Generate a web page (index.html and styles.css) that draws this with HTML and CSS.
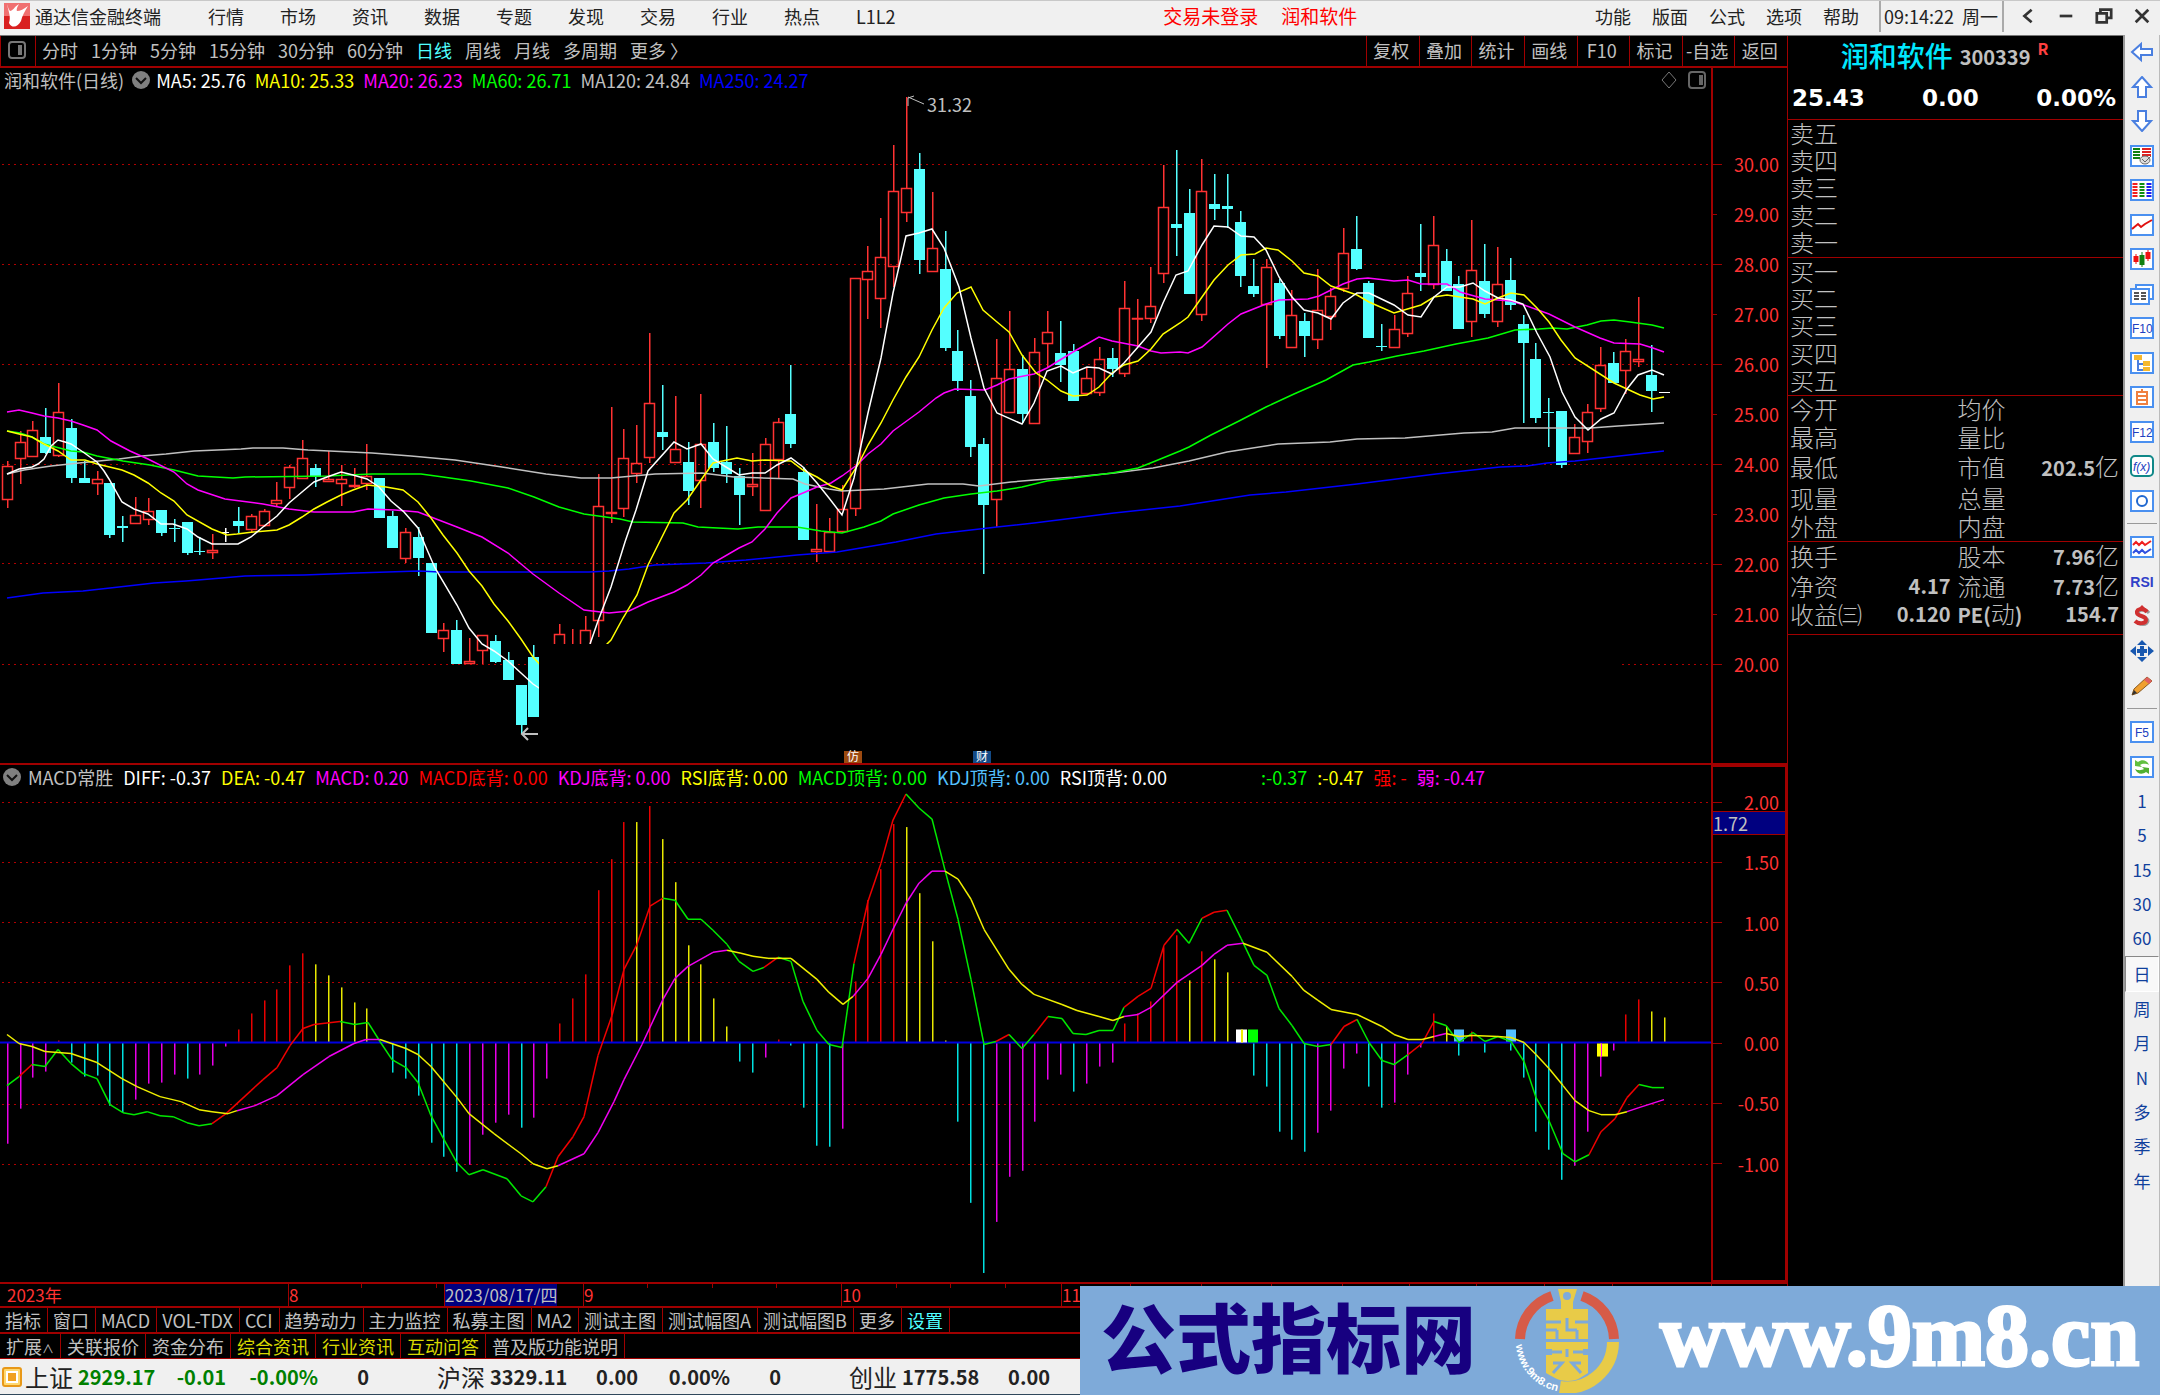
FILE: index.html
```html
<!DOCTYPE html>
<html lang="zh-CN">
<head>
  <meta charset="UTF-8">
  <meta name="viewport" content="width=device-width, initial-scale=1.0">
  <title>通达信金融终端</title>
  <link rel="stylesheet" href="styles.css">
</head>
<body>

<header class="topbar">
  <svg class="logo" viewBox="0 0 26 26" aria-hidden="true">
    <rect width="26" height="26" fill="#d92020"/>
    <path d="M0 0H26V13H0Z" fill="#f07070"/>
    <path d="M3 1C5 10 7 14 5 20C8 26 14 24 17 18C18 13 21 8 24 3C20 6 16 8 13 8C12 6 14 3 15 1C10 4 9 8 6 8C4 6 4 3 3 1Z" fill="#fff"/>
  </svg>
  <span class="app-name">通达信金融终端</span>
  <nav class="menu">
    <a href="#">行情</a><a href="#">市场</a><a href="#">资讯</a><a href="#">数据</a><a href="#">专题</a><a href="#">发现</a><a href="#">交易</a><a href="#">行业</a><a href="#">热点</a><a href="#">L1L2</a>
  </nav>
  <div class="login"><a href="#">交易未登录</a><a href="#">润和软件</a></div>
  <nav class="menu-right">
    <a href="#">功能</a><a href="#">版面</a><a href="#">公式</a><a href="#">选项</a><a href="#">帮助</a>
  </nav>
  <div class="clock"><span>09:14:22</span><span>周一</span></div>
  <div class="win-buttons">
    <button aria-label="返回"><svg viewBox="0 0 20 20"><path d="M14 3L6 10L14 17" fill="none" stroke="#333" stroke-width="3"/></svg></button>
    <button aria-label="最小化"><svg viewBox="0 0 20 20"><path d="M3 10H17" stroke="#333" stroke-width="3"/></svg></button>
    <button aria-label="还原"><svg viewBox="0 0 20 20"><path d="M6 6V3H18V12H14M2 7H13V17H2Z" fill="none" stroke="#333" stroke-width="3"/></svg></button>
    <button aria-label="关闭"><svg viewBox="0 0 20 20"><path d="M3 3L17 17M17 3L3 17" stroke="#333" stroke-width="3"/></svg></button>
  </div>
</header>

<div class="workspace">
  <main class="charts">
    <div class="toolbar">
      <button class="panel-toggle" aria-label="侧栏"><svg viewBox="0 0 18 18"><rect x="1" y="1" width="16" height="16" rx="3" fill="none" stroke="#777" stroke-width="2"/><rect x="10" y="4" width="4" height="10" fill="#777"/></svg></button>
      <div class="periods">
        <button>分时</button><button>1分钟</button><button>5分钟</button><button>15分钟</button><button>30分钟</button><button>60分钟</button><button class="active">日线</button><button>周线</button><button>月线</button><button>多周期</button><button>更多 &#x232A;</button>
      </div>
      <div class="tools">
        <button>复权</button><button>叠加</button><button>统计</button><button>画线</button><button>F10</button><button>标记</button><button>-自选</button><button>返回</button>
      </div>
    </div>

    <section class="pane kline">
      <div class="plot">
        <div class="legend">
          <span class="c-gray">润和软件(日线)</span>
          <svg class="drop" viewBox="0 0 18 18"><circle cx="9" cy="9" r="9" fill="#808080"/><path d="M4 7L9 12L14 7" fill="none" stroke="#111" stroke-width="2"/></svg>
          <span class="c-white">MA5: 25.76</span><span class="c-yellow">MA10: 25.33</span><span class="c-magenta">MA20: 26.23</span><span class="c-green">MA60: 26.71</span><span class="c-gray">MA120: 24.84</span><span class="c-blue">MA250: 24.27</span>
          <svg class="corner" viewBox="0 0 46 18"><path d="M8 1L15 9L8 17L1 9Z" fill="none" stroke="#777"/><rect x="28" y="1" width="16" height="16" rx="3" fill="none" stroke="#666" stroke-width="2"/><rect x="38" y="4" width="4" height="10" fill="#666"/></svg>
        </div>
        <svg id="kline" viewBox="0 94 1711 669" preserveAspectRatio="none"></svg>
      </div>
      <ol class="axis price-axis">
        <li>30.00</li><li>29.00</li><li>28.00</li><li>27.00</li><li>26.00</li><li>25.00</li><li>24.00</li><li>23.00</li><li>22.00</li><li>21.00</li><li>20.00</li>
      </ol>
    </section>

    <section class="pane macd">
      <div class="plot">
        <div class="legend">
          <svg class="drop" viewBox="0 0 18 18"><circle cx="9" cy="9" r="9" fill="#808080"/><path d="M4 7L9 12L14 7" fill="none" stroke="#111" stroke-width="2"/></svg>
          <span class="c-gray">MACD常胜</span><span class="c-white">DIFF: -0.37</span><span class="c-yellow">DEA: -0.47</span><span class="c-magenta">MACD: 0.20</span><span class="c-red">MACD底背: 0.00</span><span class="c-magenta">KDJ底背: 0.00</span><span class="c-yellow">RSI底背: 0.00</span><span class="c-green">MACD顶背: 0.00</span><span class="c-sky">KDJ顶背: 0.00</span><span class="c-white">RSI顶背: 0.00</span>
          <span class="c-green signal">:-0.37</span><span class="c-yellow">:-0.47</span><span class="c-red">强: -</span><span class="c-magenta">弱: -0.47</span>
        </div>
        <svg id="macd" viewBox="0 791 1711 490" preserveAspectRatio="none"></svg>
      </div>
      <ol class="axis macd-axis">
        <li>2.00</li><li>1.50</li><li>1.00</li><li>0.50</li><li>0.00</li><li>-0.50</li><li>-1.00</li>
        <li class="cursor-value">1.72</li>
      </ol>
    </section>

    <div class="dates">
      <span>2023年</span><span>8</span><span><b>2023/08/17/四</b></span><span>9</span><span>10</span><span>11</span><span></span>
      <svg id="ticks" viewBox="0 0 1787 24" preserveAspectRatio="none"></svg>
    </div>
    <div class="tabs">
      <button>指标</button><button>窗口</button><button>MACD</button><button>VOL-TDX</button><button>CCI</button><button>趋势动力</button><button>主力监控</button><button>私募主图</button><button>MA2</button><button>测试主图</button><button>测试幅图A</button><button>测试幅图B</button><button>更多</button><button class="active">设置</button>
    </div>
    <div class="tabs">
      <button>扩展<small>∧</small></button><button>关联报价</button><button>资金分布</button><button class="hot">综合资讯</button><button class="hot">行业资讯</button><button class="hot">互动问答</button><button>普及版功能说明</button>
    </div>
  </main>

  <aside class="quote">
    <div class="quote-head">
      <h1>润和软件 <small>300339</small> <sup>R</sup></h1>
      <p><span>25.43</span><span>0.00</span><span>0.00%</span></p>
    </div>
    <table class="book">
      <tr><th>卖五</th></tr><tr><th>卖四</th></tr><tr><th>卖三</th></tr><tr><th>卖二</th></tr><tr><th>卖一</th></tr>
    </table>
    <table class="book">
      <tr><th>买一</th></tr><tr><th>买二</th></tr><tr><th>买三</th></tr><tr><th>买四</th></tr><tr><th>买五</th></tr>
    </table>
    <table class="stats">
      <tr><th>今开</th><td></td><th>均价</th><td></td></tr>
      <tr><th>最高</th><td></td><th>量比</th><td></td></tr>
      <tr><th>最低</th><td></td><th>市值</th><td>202.5<i>亿</i></td></tr>
      <tr><th>现量</th><td></td><th>总量</th><td></td></tr>
      <tr><th>外盘</th><td></td><th>内盘</th><td></td></tr>
    </table>
    <table class="stats">
      <tr><th>换手</th><td></td><th>股本</th><td>7.96<i>亿</i></td></tr>
      <tr><th>净资</th><td>4.17</td><th>流通</th><td>7.73<i>亿</i></td></tr>
      <tr><th>收益㈢</th><td>0.120</td><th><b>PE(</b>动<b>)</b></th><td>154.7</td></tr>
    </table>
  </aside>

  <div class="sidebar">
    <div class="group">
      <button aria-label="后退"><svg viewBox="0 0 24 22"><path d="M2 11L11 3V8H22V14H11V19Z" fill="#fff" stroke="#4a7fe0" stroke-width="2"/></svg></button>
      <button aria-label="上移"><svg viewBox="0 0 24 22"><path d="M12 1L21 11H16V21H8V11H3Z" fill="#fff" stroke="#4a7fe0" stroke-width="2"/></svg></button>
      <button aria-label="下移"><svg viewBox="0 0 24 22"><path d="M12 21L21 11H16V1H8V11H3Z" fill="#fff" stroke="#4a7fe0" stroke-width="2"/></svg></button>
      <button aria-label="自选报价"><svg viewBox="0 0 24 22"><rect class="frame" x="1" y="1" width="22" height="20"/><path d="M3 4H10M3 7H10M3 10H10M3 13H10" stroke="#108010" stroke-width="2"/><path d="M12 4H21M12 7H21M12 10H21" stroke="#e02020" stroke-width="2"/><ellipse cx="15" cy="15" rx="5" ry="4" fill="#ddd" stroke="#666"/><path d="M12 14L15 17L21 11" fill="none" stroke="#666"/></svg></button>
      <button aria-label="行情列表"><svg viewBox="0 0 24 22"><rect class="frame" x="1" y="1" width="22" height="20"/><path d="M5 4V19" stroke="#f02020" stroke-width="5" stroke-dasharray="2 1"/><path d="M12 4V19" stroke="#109010" stroke-width="5" stroke-dasharray="2 1"/><path d="M19 4V19" stroke="#2020f0" stroke-width="5" stroke-dasharray="2 1"/></svg></button>
      <button aria-label="分时走势"><svg viewBox="0 0 24 22"><rect class="frame" x="1" y="1" width="22" height="20"/><path d="M2 15L8 10L11 13L15 10L22 6" fill="none" stroke="#e01010" stroke-width="2"/></svg></button>
      <button aria-label="K线"><svg viewBox="0 0 24 22"><rect class="frame" x="1" y="1" width="22" height="20"/><path d="M6 6V16M18 2V13" stroke="#f01010"/><path d="M6 8V14M18 4V11" stroke="#f01010" stroke-width="5"/><path d="M12 4V19" stroke="#108010"/><path d="M12 7V17" stroke="#108010" stroke-width="5"/></svg></button>
      <button aria-label="多窗口"><svg viewBox="0 0 24 22"><rect class="frame" x="6" y="2" width="17" height="14"/><rect class="frame" x="1" y="6" width="18" height="15"/><path d="M4 10H9M11 10H16M4 13H9M11 13H16M4 16H9M11 16H16" stroke="#555" stroke-width="2"/></svg></button>
      <button aria-label="F10资料"><svg viewBox="0 0 24 22"><rect class="frame" x="1" y="1" width="22" height="20"/><text x="2" y="16">F10</text></svg></button>
      <button aria-label="板块"><svg viewBox="0 0 24 22"><rect class="frame" x="1" y="1" width="22" height="20"/><path d="M8 8V18H14M8 12H14" fill="none" stroke="#4a7fe0" stroke-width="2"/><rect x="4" y="3" width="8" height="5" fill="#f5b82e"/><rect x="13" y="9" width="7" height="5" fill="#f5b82e"/><rect x="13" y="15" width="7" height="4" fill="#f5b82e"/></svg></button>
      <button aria-label="自选股"><svg viewBox="0 0 24 22"><rect class="frame" x="1" y="1" width="22" height="20"/><path d="M12 3V6M7 6H17V18H7ZM7 10H17M7 14H17" fill="none" stroke="#f08040" stroke-width="2"/></svg></button>
      <button aria-label="委托"><svg viewBox="0 0 24 22"><rect class="frame" x="1" y="1" width="22" height="20"/><text x="2" y="16">F12</text></svg></button>
      <button aria-label="公式"><svg viewBox="0 0 24 22"><rect x="1" y="1" width="22" height="20" rx="4" fill="#fff" stroke="#108888" stroke-width="2"/><text class="fx" x="3" y="16">f(x)</text></svg></button>
      <button aria-label="区间"><svg viewBox="0 0 24 22"><rect class="frame" x="1" y="1" width="22" height="20"/><circle cx="12" cy="11" r="5" fill="none" stroke="#2068d0" stroke-width="2"/></svg></button>
    </div>
    <hr>
    <div class="group short">
      <button aria-label="叠加走势"><svg viewBox="0 0 24 22"><rect class="frame" x="1" y="1" width="22" height="20"/><path d="M3 9L6 6L9 9L12 6L15 9L21 5" fill="none" stroke="#f02020" stroke-width="2"/><path d="M3 17L6 14L9 17L12 14L15 17L21 13" fill="none" stroke="#3050e0" stroke-width="2"/></svg></button>
      <button class="rsi">RSI</button>
      <button aria-label="资金"><svg viewBox="0 0 24 22"><path d="M19 8C16 4 8 4 8 9C9 13 18 11 18 16C17 21 9 20 7 17" fill="none" stroke="#999" stroke-width="3"/><path d="M17 7C14 3 6 3 7 8C8 12 16 10 16 15C16 19 8 19 5 16" fill="none" stroke="#d03030" stroke-width="4"/><path d="M12 0L17 5H7Z" fill="#d03030"/></svg></button>
      <button aria-label="移动"><svg viewBox="0 0 24 22"><path d="M12 0L17 5H7ZM12 22L17 17H7ZM0 11L6 6V16ZM24 11L18 6V16ZM10 6H14V9H17V13H14V16H10V13H7V9H10Z" fill="#1858b0"/></svg></button>
      <button aria-label="画笔"><svg viewBox="0 0 24 22"><path d="M2 20L4 14L17 2L22 6L8 18Z" fill="#f0a030" stroke="#8a5a20"/><path d="M17 2L22 6L19 9L14 5Z" fill="#e06060"/><path d="M2 20L4 15L7 18Z" fill="#333"/></svg></button>
    </div>
    <hr>
    <div class="group">
      <button aria-label="F5切换"><svg viewBox="0 0 24 22"><rect class="frame" x="1" y="1" width="22" height="20"/><text x="5" y="16">F5</text></svg></button>
      <button aria-label="刷新"><svg viewBox="0 0 24 22"><rect class="frame" x="1" y="1" width="22" height="20"/><path d="M5 10L5 4L8 6C12 3 17 4 19 9C15 7 12 8 10 9L12 11Z" fill="#60c040"/><path d="M19 12V18L16 16C12 19 7 18 5 13C9 15 12 14 14 13L12 11Z" fill="#50b030"/></svg></button>
      <button>1</button><button>5</button><button>15</button><button>30</button><button>60</button><button class="pressed">日</button><button>周</button><button>月</button><button>N</button><button>多</button><button>季</button><button>年</button>
    </div>
  </div>
</div>

<footer class="status">
  <svg class="status-icon" viewBox="0 0 20 20"><rect x="1" y="1" width="18" height="18" rx="2" fill="#ffd870" stroke="#e89818" stroke-width="2"/><rect x="5" y="5" width="10" height="10" fill="#f0a020" stroke="#fff" stroke-width="2"/></svg>
  <div class="index down"><span>上证</span><b>2929.17</b><b>-0.01</b><b>-0.00%</b><b class="count">0</b></div>
  <div class="index"><span>沪深</span><b>3329.11</b><b>0.00</b><b>0.00%</b><b>0</b></div>
  <div class="index"><span>创业</span><b>1775.58</b><b>0.00</b></div>
</footer>

<div class="banner">
  <strong>公式指标网</strong>
  <svg viewBox="0 0 104 104" aria-hidden="true">
    <path d="M5 50A47 47 0 0 1 37 7" fill="none" stroke="#d65b48" stroke-width="10"/>
    <path d="M67 7A47 47 0 0 1 99 50" fill="none" stroke="#d65b48" stroke-width="10"/>
    <path d="M98 53A46 46 0 0 1 45 98" fill="none" stroke="#e8cb48" stroke-width="12"/>
    <path d="M43 0H62L58 13V20H73V50H31V20H46V13Z" fill="#e8cb48"/>
    <path d="M31 53H73V60H68V66H73V84L65 89C60 93 46 93 40 89L31 84V66H37V60H31Z" fill="#e8cb48"/>
    <circle cx="52" cy="7" r="4" fill="#7eaad9"/>
    <path d="M31 33H46M31 41H42M52 29V41H62M62 41V50M42 41V50M60 33H73M31 63H47M58 63H73M38 74H47L38 84M66 74H57L66 84M52 60V68" fill="none" stroke="#7eaad9" stroke-width="3"/>
    <path id="arc" d="M1 56A51 51 0 0 0 42 102" fill="none"/>
    <text class="arc-text"><textPath href="#arc">www.9m8.cn</textPath></text>
  </svg>
  <span>www.9m8.cn</span>
</div>

<script src="chart.js"></script>
</body>
</html>
```

FILE: styles.css
```css
* {
  box-sizing: border-box;
}
body {
  margin: 0;
  height: 100vh;
  display: grid;
  grid-template-rows: 36px minmax(0, 1fr) 36px;
  background: #000;
  color: #c0c0c0;
  font: 400 18px/24px "Noto Sans CJK SC", sans-serif;
  overflow: hidden;
}
a {
  color: inherit;
  text-decoration: none;
}
button {
  padding: 0;
  border: 0;
  background: none;
  color: inherit;
  font: inherit;
  white-space: nowrap;
  cursor: pointer;
}
svg {
  display: block;
}

/* top bar */
.topbar {
  display: flex;
  align-items: center;
  padding-bottom: 4px;
  background: #f0f0f0;
  border-top: 1px solid #c8c8c8;
  border-bottom: 1px solid #777;
  color: #222;
  white-space: nowrap;
}
.logo {
  width: 26px;
  height: 26px;
  margin: 0 5px 0 4px;
}
.menu {
  display: flex;
  gap: 36px;
  margin-left: 47px;
}
.login {
  display: flex;
  gap: 23px;
  margin: 0 auto;
  padding-left: 30px;
  color: #f00;
  font-size: 19px;
}
.menu-right {
  display: flex;
  gap: 21px;
}
.clock {
  display: flex;
  gap: 8px;
  align-items: center;
  height: 31px;
  margin-left: 20px;
  padding: 0 4px 0 3px;
  border: solid #aaa;
  border-width: 0 2px;
}
.win-buttons {
  display: flex;
  gap: 18px;
  padding: 0 8px 0 14px;
}
.win-buttons svg {
  width: 20px;
  height: 18px;
}

.workspace {
  display: grid;
  grid-template-columns: 1fr 336px 37px;
  grid-template-rows: minmax(0, 1fr);
}
.charts {
  display: grid;
  grid-template-rows: 32px minmax(0, 697fr) minmax(0, 517fr) 24px 26px 27px;
  min-width: 0;
}

/* period toolbar */
.toolbar {
  display: flex;
  justify-content: space-between;
  border-bottom: 2px solid #a00000;
}
.toolbar button {
  padding-bottom: 3px;
}
.toolbar .panel-toggle {
  padding: 0 9px 2px 7px;
  border: solid #a00000;
  border-width: 0 1px;
}
.panel-toggle svg {
  width: 18px;
  height: 18px;
}
.periods {
  display: flex;
  gap: 13px;
  margin: 0 auto 0 6px;
}
.toolbar .active,
.tabs .active {
  color: #50ffff;
}
.tools {
  display: grid;
  grid-template-columns: repeat(8, 1fr);
  width: 421px;
}
.tools button {
  padding-right: 3px;
  border-left: 1px solid #a00000;
}

/* chart panes */
.pane {
  display: grid;
  grid-template-columns: 1fr 76px;
  grid-template-rows: minmax(0, 1fr);
  border-bottom: 2px solid #a00000;
}
.macd {
  border-bottom: 0;
}
.plot {
  display: grid;
  grid-template-rows: 26px minmax(0, 1fr);
  min-width: 0;
}
.plot > svg {
  width: 100%;
  height: 100%;
  overflow: visible;
}
.legend {
  display: flex;
  align-items: center;
  gap: 9px;
  padding: 0 4px 2px;
  white-space: nowrap;
}
.macd .legend {
  gap: 10px;
}
.drop {
  width: 18px;
  height: 18px;
  margin: 0 -3px 0 -1px;
}
.corner {
  width: 46px;
  height: 18px;
  margin-left: auto;
}
.signal {
  margin-left: 84px;
}
.c-gray { color: #c0c0c0; }
.c-white { color: #fff; }
.c-yellow { color: #ff0; }
.c-magenta { color: #f0f; }
.c-green { color: #0f0; }
.c-blue { color: #00f; }
.c-red { color: #f00; }
.c-sky { color: #54c0ff; }

.axis {
  position: relative;
  display: grid;
  margin: 0;
  padding: 0;
  list-style: none;
  color: #ff3232;
  text-align: right;
}
.axis::before {
  content: "";
}
.axis li {
  display: flex;
  align-items: center;
  justify-content: space-between;
  min-height: 0;
  padding-right: 8px;
}
.axis li::before {
  content: "";
  width: 9px;
  height: 1px;
  background: #a00000;
}
.price-axis {
  grid-template-rows: 71fr repeat(11, 50fr) 74fr;
  border-left: 2px solid #a00000;
}
.price-axis li:nth-child(even)::before {
  width: 4px;
}
.macd-axis {
  grid-template-rows: 5fr repeat(7, 60fr) 86fr;
  border: 2px solid #a00000;
}
.macd-axis li {
  padding-right: 6px;
}
.macd-axis .cursor-value {
  position: absolute;
  top: 44px;
  left: 0;
  right: 0;
  height: 24px;
  background: #000080;
  border: solid #a00000;
  border-width: 1px 0;
  color: #c0c0c0;
}
.axis .cursor-value::before {
  display: none;
}

/* svg shapes */
.grid {
  stroke: #b00000;
  stroke-dasharray: 2 4;
}
.tick {
  stroke: #a00000;
}
.ma {
  fill: none;
  stroke-width: 1.500;
}
.mark-text {
  fill: #c0c0c0;
  font-size: 18px;
}
.badge-text {
  fill: #fff;
  font-size: 12px;
}

/* date row and tabs */
.dates {
  position: relative;
  display: grid;
  grid-template-columns: 288fr 156fr 139fr 258fr 220fr 650fr 76fr;
  border-top: 2px solid #a00000;
  color: #ff3232;
  font-size: 17px;
  line-height: 22px;
}
.dates span {
  border-left: 1px solid #a00000;
  white-space: nowrap;
}
.dates span:first-child {
  padding-left: 7px;
  border: 0;
}
.dates b {
  display: inline-block;
  background: #000080;
  color: #c0c0c0;
  font-weight: 400;
}
#ticks {
  position: absolute;
  width: 100%;
  height: 24px;
}
.tabs {
  display: flex;
  border-top: 2px solid #a00000;
}
.tabs:last-child {
  border-bottom: 1px solid #a00000;
}
.tabs button {
  padding: 0 6px 0 5px;
  border-right: 1px solid #a00000;
}
.tabs:last-child button {
  padding-left: 6px;
}
.tabs small {
  font-size: 12px;
}
.tabs .hot {
  color: #d8d800;
}

/* quote panel */
.quote {
  border-left: 1px solid #a00000;
}
.quote-head {
  height: 84px;
  border-bottom: 1px solid #a00000;
}
.quote-head h1 {
  display: flex;
  justify-content: center;
  align-items: center;
  gap: 7px;
  height: 38px;
  margin: 0;
  padding-right: 22px;
  color: #00e8ff;
  font-size: 28px;
  font-weight: 500;
}
.quote-head small {
  padding-top: 4px;
  color: #c0c0c0;
  font-size: 20px;
  font-weight: 700;
}
.quote-head sup {
  align-self: flex-start;
  color: #ff4040;
  font-size: 16px;
  font-weight: 700;
}
.quote-head p {
  display: flex;
  justify-content: space-between;
  margin: 0;
  padding: 12px 7px 0 4px;
  color: #fff;
  font: 700 23px/24px "DejaVu Sans", sans-serif;
}
.quote table {
  width: 100%;
  border-spacing: 0;
  border-bottom: 1px solid #a00000;
  table-layout: fixed;
}
.quote th {
  padding: 0 0 2px 2px;
  font-size: 24px;
  font-weight: 300;
  line-height: 22px;
  text-align: left;
  white-space: nowrap;
}
.quote td {
  padding: 0 4px 2px 0;
  font-size: 20px;
  font-weight: 700;
  text-align: right;
}
.quote td i {
  font-size: 24px;
  font-style: normal;
  font-weight: 300;
}
.quote th b {
  font-size: 20px;
  font-weight: 700;
}
.book {
  height: 138px;
}
.stats {
  height: 146px;
}
.stats:last-child {
  height: 93px;
  padding-bottom: 5px;
}
.stats td:nth-child(2) {
  padding-right: 5px;
}

/* icon sidebar */
.sidebar {
  background: #f0f0f0;
  border-left: 2px solid #999;
  border-right: 1px solid #bbb;
  margin-top: -1px;
}
.group {
  display: flex;
  flex-direction: column;
  height: 483px;
}
.group.short {
  height: 173px;
}
.group button {
  flex: 1;
  display: flex;
  align-items: center;
  justify-content: center;
  color: #10409c;
  font-size: 17px;
}
.group svg {
  width: 24px;
  height: 22px;
}
.group text {
  fill: #2040c0;
  font: 400 12px "Liberation Sans", sans-serif;
}
.group .fx {
  font-style: italic;
}
.frame {
  fill: #fff;
  stroke: #4a90f0;
  stroke-width: 2;
}
.group .rsi {
  color: #3040c8;
  font: 700 14px "Liberation Sans", sans-serif;
}
.group .pressed {
  border: 1px solid #888;
  border-right-color: #fff;
  border-bottom-color: #fff;
  background: #f8f8f8;
}
.sidebar hr {
  height: 1px;
  margin: 5px 2px 6px;
  border: 0;
  background: #999;
}

/* index status bar */
.status {
  display: flex;
  align-items: center;
  background: #f0f0f0;
  border-bottom: 1px solid #30485c;
  color: #222;
}
.status-icon {
  width: 20px;
  height: 20px;
  margin: 0 3px 0 2px;
}
.index {
  display: grid;
  grid-template-columns: 53px 77px 71px 92px 51px;
  width: 412px;
  font-size: 20px;
  text-align: right;
}
.index span {
  font-size: 24px;
  text-align: left;
}
.index b {
  font-weight: 700;
}
.down b {
  color: #008000;
}
.down .count {
  color: #222;
}

/* site banner over the lower right corner */
.banner {
  position: absolute;
  right: 0;
  bottom: 0;
  display: flex;
  align-items: center;
  width: 50%;
  height: 109px;
  padding-left: 21px;
  background: #7eaad9;
  white-space: nowrap;
}
.banner strong {
  padding-bottom: 12px;
  color: #170080;
  font-size: 75px;
  font-weight: 900;
  line-height: 96px;
}
.banner svg {
  width: 104px;
  height: 104px;
  margin: 0 41px 0 39px;
}
.banner span {
  padding-bottom: 9px;
  color: #fff;
  font: 700 88px/96px "Liberation Serif", serif;
  -webkit-text-stroke: 3px #fff;
}
.arc-text {
  fill: #fff;
  font: 700 11px "Liberation Sans", sans-serif;
}
```

FILE: chart.js
```js
const RED = '#ff3232', CYAN = '#54ffff', WHITE = '#ffffff';
const STEP = 12.847, FIRST = 6.7, LINE = 1.5;
const barX = i => Math.round(FIRST + STEP * i);

// type, high, body top, body bottom, low (chart units, 50 per yuan)
const candles = `
R 461 466 500 508|R 431 442 459 484|R 421 430 457 457|C 408 437 453 454|R 383 412 456 457
C 419 428 478 483|C 461 478 483 483|R 471 479 484 495|C 483 483 535 538|C 516 526 528 542
R 497 515 524 524|R 498 511 520 525|C 510 510 533 536|C 519 528 529 542|C 522 522 553 555
C 537 551 552 555|R 534 550 553 559|W 528 532 533 542|C 507 521 526 533|R 514 516 530 533
R 509 511 526 527|R 482 500 504 506|R 465 467 488 499|R 440 458 479 479|C 464 468 477 487
R 451 479 482 482|R 465 479 484 506|R 468 485 487 488|R 444 476 484 490|C 478 478 518 518
C 511 516 548 548|R 528 532 559 563|C 527 537 558 576|C 563 563 633 633|R 623 630 639 652
C 620 630 664 664|R 638 661 664 664|R 635 635 651 664|C 635 641 662 663|C 652 660 680 680
C 685 685 725 734|C 645 657 717 717|R 680 682 715 718|R 624 634 655 660|R 629 652 655 658
R 616 630 655 660|R 474 506 621 637|R 407 512 514 523|R 429 458 509 517|R 425 463 474 483
R 333 403 458 463|C 385 432 437 450|R 396 449 463 463|C 442 462 491 505|R 394 444 481 508
C 423 442 468 472|C 426 462 474 483|C 468 476 495 525|R 453 484 487 496|R 438 444 511 511
R 418 422 460 478|C 365 414 444 448|C 467 472 540 540|R 504 549 552 562|R 518 532 552 552
R 485 509 532 533|R 278 278 509 516|R 246 271 280 319|R 218 257 299 328|R 145 191 267 287
R 97 188 213 222|C 153 169 260 274|R 192 248 272 272|C 231 269 348 351|C 330 351 381 391
C 380 396 447 457|C 438 444 505 574|R 339 378 500 527|R 311 369 413 413|C 355 369 414 423
R 338 352 424 424|R 311 332 344 368|C 321 353 365 382|C 344 351 401 401|R 368 378 394 394
R 347 359 393 396|C 348 358 369 377|R 281 308 374 377|R 299 318 319 347|R 267 306 319 323
R 165 207 274 283|C 150 224 228 256|C 189 213 294 294|R 159 191 315 321|C 174 204 209 220
C 174 206 209 228|C 211 222 276 287|C 259 286 294 297|R 259 267 305 368|C 279 283 336 339
R 290 315 348 348|C 313 321 336 357|R 269 310 340 349|R 288 296 317 330|R 228 253 289 292
C 216 249 269 270|C 281 283 338 338|C 324 346 347 351|R 315 329 348 348|R 276 293 334 337
C 224 273 277 291|R 216 245 285 289|C 249 261 291 291|C 276 284 329 329|R 220 270 322 337
C 244 281 314 318|R 247 284 322 327|C 258 280 305 310|C 315 324 343 423|C 343 359 418 423
C 398 412 413 447|C 411 411 465 468|R 424 437 454 454|R 404 412 442 453|R 347 365 409 412
C 352 363 383 383|R 339 351 371 394|R 297 359 362 367|C 345 375 391 412|W 392 392 393 393
`.trim().split(/[|\n]/);

const averages = [
  ['#0000ff', '7,598 43,593 83,591 119,587 154,583 186,581 210,579 245,576 304,575 356,573 419,571 439,572 589,572 609,571 629,569 655,565 706,563 746,560 797,555 837,552 896,542 936,534 997,527 1034,523 1114,513 1180,506 1250,495 1286,492 1357,484 1436,474 1500,467 1527,466 1547,463 1575,461 1664,451'],
  ['#c0c0c0', '7,474 24,470 51,466 79,463 119,459 142,456 166,454 194,451 241,449 253,448 283,448 308,450 372,453 411,456 455,460 502,467 546,474 581,478 611,478 655,474 702,473 734,477 793,479 805,484 829,489 842,491 884,489 928,484 963,484 979,486 1011,482 1034,480 1074,477 1114,473 1153,468 1189,461 1227,452 1278,444 1330,442 1357,439 1405,438 1464,433 1492,432 1515,428 1591,428 1618,426 1664,423'],
  ['#00ff00', '7,431 20,433 32,437 44,444 71,451 83,452 97,456 123,461 150,465 174,470 198,476 233,478 245,477 328,476 348,475 372,474 421,474 443,477 471,481 508,488 534,497 559,507 584,514 620,519 633,522 683,523 698,527 738,529 758,527 797,527 821,531 842,533 864,527 881,521 893,514 919,505 944,498 971,494 997,491 1022,487 1047,481 1073,478 1112,473 1138,468 1153,462 1180,451 1189,447 1211,435 1239,421 1266,407 1294,394 1326,380 1353,365 1369,362 1397,356 1424,351 1456,344 1488,338 1515,330 1539,329 1553,328 1567,329 1587,325 1601,321 1614,320 1630,322 1652,325 1664,328'],
  ['#ff00ff', '7,412 19,410 32,413 44,416 58,418 71,421 83,425 97,430 111,441 130,451 148,459 174,472 187,484 198,490 225,499 263,504 289,509 314,512 353,512 368,509 395,510 418,512 431,517 457,527 482,537 508,553 533,574 559,593 584,610 609,613 629,611 648,602 674,592 687,585 701,575 713,563 739,548 752,542 765,529 777,513 791,498 803,493 817,487 831,483 842,476 857,465 868,454 881,444 893,431 919,412 936,398 944,393 955,389 985,390 997,385 1009,379 1034,374 1047,368 1073,352 1087,344 1099,337 1112,341 1138,346 1151,351 1161,353 1180,352 1188,353 1202,347 1228,324 1241,314 1266,304 1279,300 1308,299 1319,296 1343,284 1357,279 1368,278 1394,281 1408,280 1421,284 1447,284 1460,292 1485,299 1511,301 1524,305 1549,314 1575,327 1600,338 1614,343 1640,344 1653,348 1664,352'],
  ['#ffff00', '7,431 19,434 32,437 44,444 58,451 71,460 85,460 97,464 122,470 134,475 148,483 161,493 174,501 187,515 212,529 227,535 237,534 253,532 277,530 289,525 302,517 314,509 327,502 341,495 353,490 367,485 386,487 403,490 418,502 431,518 443,535 457,553 469,571 482,586 494,604 508,621 521,639 533,657 545,670 590,665 607,644 611,640 623,618 637,595 648,565 674,513 687,500 701,480 713,463 737,458 752,461 765,460 791,461 803,470 817,477 831,486 842,490 859,463 868,445 881,423 893,400 906,377 919,357 932,330 944,308 957,293 971,287 983,310 997,322 1009,332 1022,355 1036,373 1047,380 1061,391 1073,396 1087,395 1099,387 1112,373 1124,365 1138,361 1151,349 1163,334 1180,323 1188,317 1202,297 1214,280 1228,265 1241,255 1255,254 1266,248 1278,250 1292,261 1304,273 1318,276 1331,286 1357,295 1369,302 1394,313 1421,305 1434,297 1447,295 1460,297 1473,299 1485,304 1498,298 1511,293 1524,295 1537,308 1549,322 1561,340 1575,358 1614,383 1640,395 1653,399 1664,397'],
  ['#ffffff', '7,474 19,469 32,467 38,464 44,459 51,446 58,440 65,442 71,444 83,452 97,462 104,471 109,479 122,502 134,509 148,514 161,524 173,524 187,529 198,537 212,544 238,544 251,537 263,527 277,516 289,503 302,492 314,482 327,477 341,472 353,475 367,479 379,487 391,501 404,512 418,528 425,545 435,568 457,605 469,628 482,644 494,651 508,661 521,673 533,684 545,692 575,680 590,644 598,621 611,587 625,542 636,510 648,471 674,442 687,449 701,444 713,459 726,467 739,475 752,473 765,473 777,465 791,458 803,467 817,483 829,498 842,515 854,478 868,413 881,358 893,293 906,236 919,233 932,229 944,248 959,287 971,338 984,388 997,413 1022,424 1034,403 1047,371 1061,366 1073,373 1087,367 1099,368 1112,374 1124,363 1138,347 1151,332 1163,303 1176,275 1188,271 1202,245 1214,226 1228,227 1241,236 1254,237 1266,250 1279,277 1292,297 1304,310 1318,313 1331,319 1343,303 1357,293 1369,293 1394,305 1408,315 1421,317 1434,297 1447,287 1460,287 1473,283 1485,291 1498,298 1511,300 1523,304 1537,333 1550,357 1562,392 1575,417 1588,430 1601,419 1614,413 1627,389 1638,375 1652,370 1664,375']
];

// MACD histogram: colour and end of each bar, '-' is an empty day
const bars = `
M1143 M1108 M1077 M1071 R1040 C1062 C1076 C1075 C1105 C1112 M1099 M1083 M1082 M1074 C1078 M1074 M1065 M1046
R1029 R1013 R1000 R989 R965 R953 Y964 Y975 Y987 Y1002 Y1008 - C1072 C1078 C1095 C1142 C1156 C1171 M1164 M1134
M1122 M1114 C1127 M1117 M1078 R1023 R998 R974 R890 R859 R822 Y822 R806 Y839 Y882 Y945 Y964 Y998 Y1026 C1061
C1072 M1057 R1039 C1045 C1107 C1145 C1146 M1128 R981 R900 R869 R824 Y827 Y893 Y941 Y1040 C1121 C1202 C1272
M1221 M1176 M1170 M1121 M1079 M1074 C1091 M1083 M1066 M1062 R1023 R1013 R1001 R947 R935 Y980 R951 Y959 Y972
- C1075 C1086 C1131 C1139 C1151 M1132 M1110 M1068 M1053 C1086 C1107 M1102 M1074 M1047 R1013 Y1026 C1055 R1031
C1052 - C1050 C1077 C1131 C1149 C1179 M1165 M1131 M1076 M1050 R1014 R999 Y1011 Y1017
`.trim().split(/\s+/);
const barColors = { R: '#e80000', Y: '#e8e800', C: '#00e0e0', M: '#e800e8' };

// lines that change colour with direction: colour letter, then points
const diff = 'G 7,1085 19,1076 R 32,1064 G 45,1066 58,1049 71,1063 83,1073 97,1078 110,1104 123,1112 134,1114 147,1111 160,1115 173,1116 187,1122 199,1125 212,1123 R 226,1113 251,1090 263,1079 277,1067 290,1045 303,1028 314,1024 340,1021 G 355,1024 368,1022 380,1041 392,1059 406,1067 418,1082 431,1115 444,1139 457,1162 469,1174 483,1169 507,1178 521,1195 533,1201 546,1186 R 558,1156 573,1136 584,1116 598,1055 612,1015 624,969 637,944 650,906 663,898 G 675,900 688,919 701,919 713,930 727,944 739,961 753,971 764,967 R 778,957 G 791,961 803,1001 817,1030 829,1044 842,1047 854,963 R 868,901 881,863 893,820 906,794 G 919,808 932,819 945,870 958,919 971,979 984,1044 996,1041 R 1009,1034 G 1022,1048 1034,1034 R 1048,1016 G 1062,1018 1073,1033 1086,1034 1099,1030 1113,1030 1124,1007 R 1138,996 1151,988 1164,945 1177,929 G 1189,943 1202,918 R 1214,912 1227,910 G 1241,938 1254,965 1267,975 1279,1008 1292,1025 1304,1043 1318,1046 1331,1044 R 1344,1026 1357,1019 G 1369,1042 1382,1060 1394,1064 1408,1054 R 1422,1043 1434,1021 G 1446,1025 1459,1042 1473,1032 1485,1041 1498,1036 1511,1041 1524,1061 1536,1097 1549,1120 1563,1153 1575,1161 1589,1154 R 1601,1131 1615,1118 1627,1097 1639,1084 G 1652,1087 1664,1087';
const dea = 'Y 7,1034 19,1043 32,1046 45,1051 71,1053 97,1062 122,1078 137,1086 160,1096 181,1101 199,1109 212,1111 228,1113 237,1110 M 255,1105 277,1095 303,1074 329,1056 354,1043 366,1039 380,1039 Y 406,1048 418,1054 431,1066 457,1097 469,1113 494,1133 521,1153 533,1163 547,1168 558,1165 M 584,1153 598,1132 614,1101 624,1079 642,1044 663,999 675,978 688,966 713,952 727,950 Y 741,953 753,956 768,958 791,958 817,979 829,992 843,1004 853,996 M 868,978 881,954 893,929 906,903 919,883 932,871 945,871 Y 958,879 971,899 984,929 1009,969 1022,984 1034,994 1062,1004 1077,1010 1099,1016 1113,1020 1124,1016 M 1138,1014 1151,1007 1177,982 1202,965 1214,954 1227,945 1243,943 Y 1267,952 1292,976 1304,990 1318,1000 1331,1009 1357,1014 1382,1026 1394,1034 1408,1039 1422,1039 1434,1036 M 1446,1033 Y 1459,1036 1473,1035 1498,1036 1511,1037 1524,1042 1536,1054 1549,1068 1563,1085 1575,1100 1589,1110 1601,1114 1615,1114 1627,1111 M 1639,1107 1664,1099';
const lineColors = { R: '#f00000', G: '#00e800', Y: '#f0f000', M: '#f000f0' };

const gridLine = y => `<path class="grid" d="M2 ${y}.5H1711" shape-rendering="crispEdges"/>`;
const rect = (x, y, w, h, fill) => `<rect x="${x}" y="${y}" width="${w}" height="${h}" fill="${fill}"/>`;

function drawCandle(row, i) {
  const [type, ...values] = row.split(' ');
  const [high, top, bottom, low] = values.map(Number);
  const x = barX(i);
  if (type === 'R') {
    return rect(x, high, LINE, top - high, RED) + rect(x, bottom, LINE, low - bottom, RED) +
      `<rect x="${x - 4.5}" y="${top + 0.5}" width="10" height="${Math.max(bottom - top - 1, 0.5)}" fill="none" stroke="${RED}" stroke-width="${LINE}"/>`;
  }
  const color = type === 'C' ? CYAN : WHITE;
  const half = i === 17 ? 3 : 5;
  return rect(x, high, LINE, low - high, color) + rect(x - half, top, half * 2 + 1, bottom - top, color);
}

function drawSegments(text) {
  let color = '', last = '', out = '';
  text.split(' ').forEach(token => {
    if (lineColors[token]) {
      color = lineColors[token];
      return;
    }
    if (last) out += `<path class="ma" d="M${last}L${token}" stroke="${color}"/>`;
    last = token;
  });
  return out;
}

function drawKline() {
  let out = [164, 264, 364, 464, 563, 664].map(gridLine).join('');
  out += candles.map(drawCandle).join('');
  averages.forEach(([color, points]) => {
    out += `<polyline class="ma" points="${points}" stroke="${color}"/>`;
  });
  // blank area under the averages
  out += rect(539, 644, 1083, 116, '#000');
  out += '<path d="M924 104L908 97M908 106V98L914 96" fill="none" stroke="#c0c0c0"/>';
  out += '<text class="mark-text" x="927" y="112">31.32</text>';
  out += '<path d="M538 734H522M528 728L522 734L528 740" fill="none" stroke="#c0c0c0" stroke-width="2"/>';
  out += rect(844, 751, 18, 12, '#9c4a10') + '<text class="badge-text" x="847" y="761">仿</text>';
  out += rect(973, 751, 18, 12, '#134a86') + '<text class="badge-text" x="976" y="761">财</text>';
  document.getElementById('kline').innerHTML = out;
}

function drawMacd() {
  let out = [802, 862, 922, 982, 1103, 1163].map(gridLine).join('');
  bars.forEach((bar, i) => {
    if (bar === '-') return;
    const end = Number(bar.slice(1));
    out += rect(barX(i), Math.min(end, 1042), LINE, Math.abs(end - 1042), barColors[bar[0]]);
  });
  out += rect(0, 1041, 1711, 2, '#0000e0');
  out += rect(1236, 1029, 11, 13, '#fff') + rect(1241, 1029, 2, 13, '#f0f000');
  out += rect(1248, 1029, 10, 13, '#00ff00');
  out += rect(1454, 1029, 10, 12, '#54c0ff') + rect(1506, 1029, 10, 12, '#54c0ff');
  out += rect(1597, 1043, 11, 13, '#ff0') + rect(1601, 1043, 1, 13, '#f0f');
  document.getElementById('macd').innerHTML = out + drawSegments(diff) + drawSegments(dea);
}

function drawTicks() {
  const marks = [361, 436, 647, 712, 776, 896, 950, 1005, 1130, 1201, 1271, 1342, 1409, 1476, 1544, 1612];
  document.getElementById('ticks').innerHTML = marks.map(x => `<path class="tick" d="M${x}.5 0V4"/>`).join('');
}

drawKline();
drawMacd();
drawTicks();
```
